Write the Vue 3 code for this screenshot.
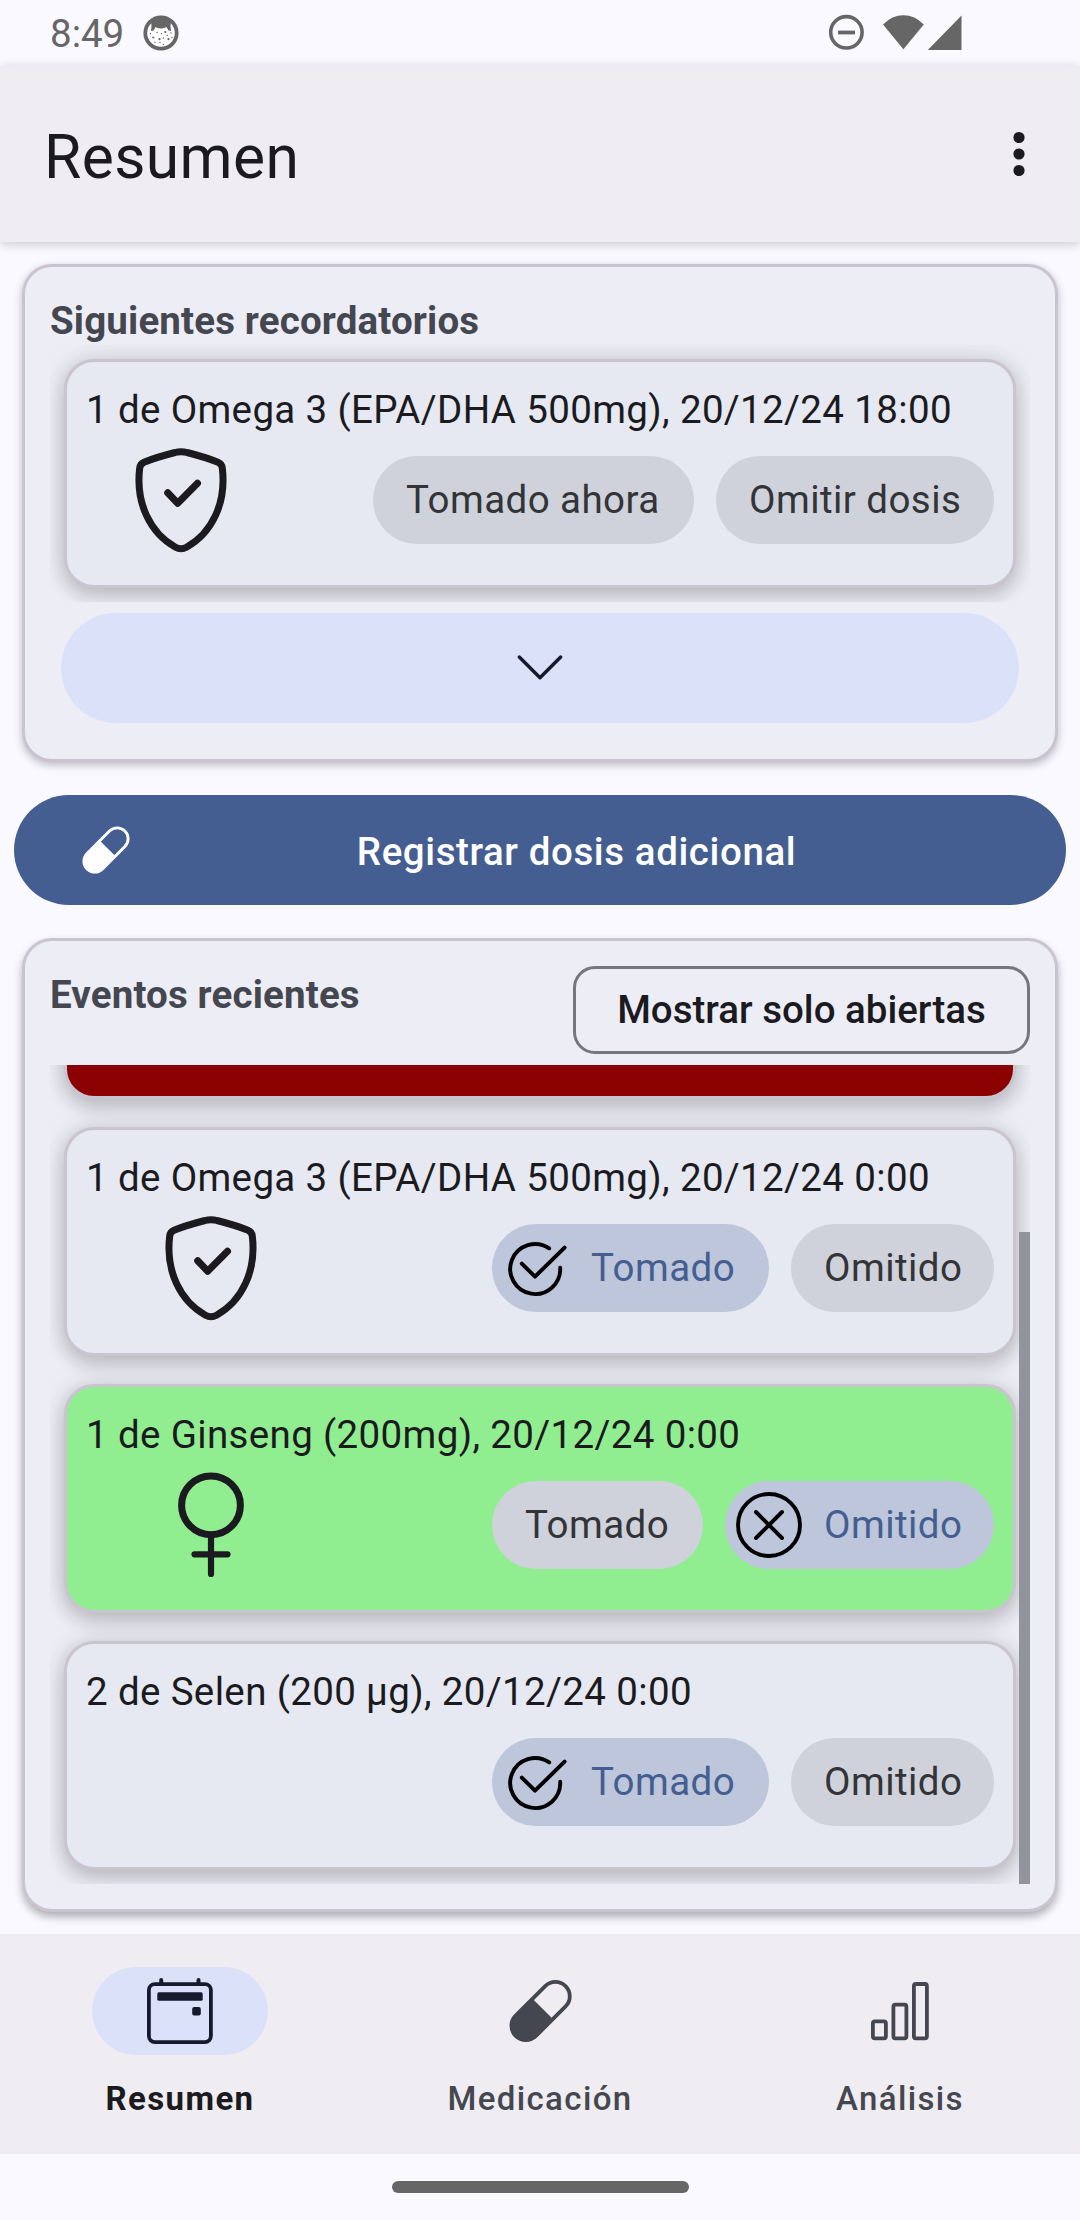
<script setup>
const next = {
  title: '1 de Omega 3 (EPA/DHA 500mg), 20/12/24 18:00',
  icon: 'shield',
  chips: [{ label: 'Tomado ahora', width: 321 }, { label: 'Omitir dosis', width: 278 }],
}

const events = [
  { title: '', tone: 'red', icon: '', chips: [] },
  {
    title: '1 de Omega 3 (EPA/DHA 500mg), 20/12/24 0:00',
    icon: 'shield',
    chips: [{ label: 'Tomado', mark: 'check', width: 277 }, { label: 'Omitido', width: 203 }],
  },
  {
    title: '1 de Ginseng (200mg), 20/12/24 0:00',
    tone: 'green',
    icon: 'female',
    chips: [{ label: 'Tomado', width: 211 }, { label: 'Omitido', mark: 'cross', width: 269 }],
  },
  {
    title: '2 de Selen (200 µg), 20/12/24 0:00',
    icon: '',
    chips: [{ label: 'Tomado', mark: 'check', width: 277 }, { label: 'Omitido', width: 203 }],
  },
]
</script>

<template>
  <div class="screen">
    <header class="status">
      <span class="clock">8:49</span>
      <svg class="cat" width="36" height="36" viewBox="0 0 36 36">
        <circle cx="18" cy="18" r="15.7" fill="#fff" stroke="#666" stroke-width="3.8" />
        <path d="M8 6Q18-1 28 6L27.5 11l.5 5-2.5-.5-2-3.5q-5.5 3-11 0l-2 3.5-2.5.5.5-5Z" fill="#666" />
        <g fill="#666">
          <circle cx="10.3" cy="22.5" r="1.1" /><circle cx="22.3" cy="17" r="1.1" />
          <circle cx="16.5" cy="24.2" r="1.1" /><circle cx="25.5" cy="24.2" r="1.1" />
          <circle cx="14" cy="17.5" r=".7" /><circle cx="7.5" cy="18.5" r=".7" />
          <circle cx="18.4" cy="18.6" r=".7" /><circle cx="28" cy="18" r=".7" />
          <circle cx="20.4" cy="23" r=".7" /><circle cx="12" cy="27.3" r=".7" />
          <circle cx="17" cy="27.5" r=".7" /><circle cx="20.5" cy="29.5" r=".7" />
          <circle cx="24.2" cy="20.5" r=".7" /><circle cx="29" cy="22.5" r=".7" />
        </g>
      </svg>
      <svg class="system" width="138" height="40" viewBox="826 12 138 40" fill="#666">
        <circle cx="846.4" cy="32.3" r="15.7" fill="none" stroke="#666" stroke-width="3.6" />
        <rect x="838" y="30.6" width="17" height="3.8" />
        <path d="M903.4 49.2 883 24.4Q892 15.2 903.4 15.2T923.8 24.4Z" />
        <path d="M961.5 15.6V50H927.8Z" />
      </svg>
    </header>

    <div class="appbar">
      <h1>Resumen</h1>
      <svg width="12" height="46" viewBox="0 0 12 46" fill="#1b1b1f">
        <circle cx="6" cy="6.5" r="5.6" /><circle cx="6" cy="23" r="5.6" /><circle cx="6" cy="39.5" r="5.6" />
      </svg>
    </div>

    <main>
      <section class="panel">
        <h2>Siguientes recordatorios</h2>
        <div class="list">
          <article class="card">
            <p>{{ next.title }}</p>
            <div class="row first">
              <svg class="glyph" viewBox="0 0 110 110">
                <path d="M49 7.5Q55 5.8 61 7.5C70 9.8 84 14 92 17.2Q95.8 18.8 96.3 23C100.5 58 86 88 60.5 102.2Q55 105.2 49.5 102.2C24 88 9.5 58 13.7 23Q14.2 18.8 18 17.2C26 14 40 9.8 49 7.5Z" />
                <path d="M41.7 47.8 51.7 58.2 71.5 38.2" />
              </svg>
              <div class="chips">
                <button v-for="c in next.chips" :key="c.label" class="chip" :style="{ width: c.width + 'px' }">
                  <span>{{ c.label }}</span>
                </button>
              </div>
            </div>
          </article>
        </div>
        <button class="expand">
          <svg width="50" height="30" viewBox="0 0 50 30">
            <path d="M4.3 4 25 24.7 45.7 4" fill="none" stroke="#151b2c" stroke-width="3.4" stroke-linecap="round" stroke-linejoin="round" />
          </svg>
        </button>
      </section>

      <button class="register">
        <svg width="50" height="50" viewBox="0 0 66 66">
          <g transform="translate(33 33) rotate(-45)">
            <rect x="-35.3" y="-14.4" width="70.6" height="28.8" rx="14.4" fill="none" stroke="#fff" stroke-width="3.8" />
            <path d="M3-14.4H-21a14.4 14.4 0 0 0 0 28.8H3Z" fill="#fff" />
          </g>
        </svg>
        <span>Registrar dosis adicional</span>
      </button>

      <section class="panel recent">
        <div class="head">
          <h2>Eventos recientes</h2>
          <button class="outlined">Mostrar solo abiertas</button>
        </div>
        <div class="list scroll">
          <article v-for="(e, i) in events" :key="i" class="card" :class="e.tone">
            <p>{{ e.title }}</p>
            <div class="row">
              <svg class="glyph" viewBox="0 0 110 110">
                <template v-if="e.icon === 'shield'">
                  <path d="M49 7.5Q55 5.8 61 7.5C70 9.8 84 14 92 17.2Q95.8 18.8 96.3 23C100.5 58 86 88 60.5 102.2Q55 105.2 49.5 102.2C24 88 9.5 58 13.7 23Q14.2 18.8 18 17.2C26 14 40 9.8 49 7.5Z" />
                  <path d="M41.7 47.8 51.7 58.2 71.5 38.2" />
                </template>
                <template v-else-if="e.icon === 'female'">
                  <circle cx="55" cy="35.3" r="29.4" />
                  <path d="M55 64.7V104M38.5 84.3H71.5" stroke-width="6.2" />
                </template>
              </svg>
              <div class="chips">
                <button v-for="c in e.chips" :key="c.label" class="chip" :class="{ on: c.mark }" :style="{ width: c.width + 'px' }">
                  <svg v-if="c.mark === 'check'" class="mark" viewBox="0 0 66 66">
                    <path d="M46.2 13.3A25 25 0 1 0 57.2 32.8M18.8 28.6 32 41.6 61.6 12.6" />
                  </svg>
                  <svg v-else-if="c.mark === 'cross'" class="mark" viewBox="0 0 66 66">
                    <circle cx="33" cy="33" r="31" />
                    <path d="M20 20 46 46M46 20 20 46" />
                  </svg>
                  <span>{{ c.label }}</span>
                </button>
              </div>
            </div>
          </article>
          <i class="thumb"></i>
        </div>
      </section>
    </main>

    <nav>
      <a class="active">
        <span class="spot">
          <svg width="66" height="66" viewBox="0 0 66 66" fill="#151b2c">
            <rect x="1.9" y="6.1" width="62" height="58" rx="6" fill="none" stroke="#151b2c" stroke-width="3.8" />
            <path d="M14.2 6V2M51.5 6V2" stroke="#151b2c" stroke-width="4" stroke-linecap="round" />
            <rect x="10.3" y="14.3" width="45.4" height="8.5" rx="1.6" />
            <rect x="45.2" y="29" width="8.6" height="8.5" rx="2" />
          </svg>
        </span>
        <b>Resumen</b>
      </a>
      <a>
        <span class="spot">
          <svg width="66" height="66" viewBox="0 0 66 66">
            <g transform="translate(33.6 33) rotate(-45)">
              <rect x="-35.3" y="-14.4" width="70.6" height="28.8" rx="14.4" fill="none" stroke="#44474f" stroke-width="3.8" />
              <path d="M3-14.4H-21a14.4 14.4 0 0 0 0 28.8H3Z" fill="#44474f" />
            </g>
          </svg>
        </span>
        <b>Medicación</b>
      </a>
      <a>
        <span class="spot">
          <svg width="66" height="66" viewBox="0 0 66 66" fill="none" stroke="#44474f" stroke-width="3.8">
            <rect x="5.9" y="43.3" width="13" height="17" rx="2" />
            <rect x="26.4" y="26.7" width="13" height="33.6" rx="2" />
            <rect x="46.9" y="6" width="13" height="54.3" rx="2" />
          </svg>
        </span>
        <b>Análisis</b>
      </a>
    </nav>
    <footer><i></i></footer>
  </div>
</template>

<style>
body { margin: 0; background: #faf9ff; }
</style>

<style scoped>
.screen {
  width: 1080px;
  height: 2220px;
  display: flex;
  flex-direction: column;
  background: #faf9ff;
  color: #1b1b1f;
  font-family: Roboto, "Noto Sans", sans-serif;
  font-size: 38.5px;
  overflow: hidden;
}
* { box-sizing: border-box; }
svg { display: block; flex: none; }
h1, h2, p { margin: 0; font-weight: 400; }
button { border: 0; padding: 0; background: none; font: inherit; color: inherit; white-space: nowrap; }

.status { height: 66px; flex: none; display: flex; align-items: center; padding: 0 116px 0 50px; color: #666; }
.clock { line-height: 68px; padding-top: 1px; width: 93px; }
.system { margin-left: auto; margin-bottom: 2px; }

.appbar {
  height: 176px;
  flex: none;
  display: flex;
  align-items: center;
  justify-content: space-between;
  padding: 0 55px 0 44px;
  background: #efedf1;
  box-shadow: 0 2px 10px rgba(0, 0, 0, .2);
  position: relative;
}
.appbar h1 { font-size: 60.5px; line-height: 80px; padding-top: 7px; letter-spacing: .0066em; }

main { flex: 1; display: flex; flex-direction: column; padding: 22px; min-height: 0; }
.panel {
  border: 3px solid #cac4d0;
  border-radius: 30px;
  background: #ededf6;
  padding: 0 25px;
  box-shadow: 0 3px 8px rgba(0, 0, 0, .26);
  height: 498px;
  flex: none;
}
.panel h2 { font-size: 38.5px; font-weight: 700; color: #44474f; line-height: 56px; height: 78px; padding-top: 26px; letter-spacing: .004em; }
.list { padding: 14px; overflow: hidden; }
.card {
  height: 229px;
  flex: none;
  border: 3px solid #cac4d0;
  border-radius: 30px;
  background: #e6e9f1;
  box-shadow: 0 8px 18px rgba(20, 24, 16, .18), 0 0 26px rgba(40, 48, 20, .14);
  padding: 20px 19px 0;
}
.card p { line-height: 55px; height: 55px; white-space: pre; letter-spacing: .0093em; }
.card.red { background: #8b0000; }
.card.green { background: #90ee90; }
.row { display: flex; align-items: center; margin-top: 8px; height: 110px; padding-left: 70px; }
.row.first { padding-left: 40px; }
.glyph { width: 110px; height: 110px; fill: none; stroke: #1b1b1f; stroke-width: 7; stroke-linecap: round; stroke-linejoin: round; }
.chips { display: flex; gap: 22px; margin-left: auto; }
.chip {
  height: 88px;
  flex: none;
  display: flex;
  align-items: center;
  padding: 0 0 0 33px;
  border-radius: 44px;
  background: #cfd2da;
  color: #333438;
  letter-spacing: .0115em;
}
.chip span { padding-bottom: 2px; }
.chip.on { background: #bdc6da; color: #455e91; padding-left: 11px; }
.mark { width: 66px; height: 66px; margin-right: 22px; fill: none; stroke: #000; stroke-width: 3.9; stroke-linecap: round; stroke-linejoin: round; }

.expand {
  display: flex;
  align-items: center;
  justify-content: center;
  height: 110px;
  width: 958px;
  margin: 11px 11px 0;
  border-radius: 55px;
  background: #dce1fa;
}
.register {
  display: flex;
  align-items: center;
  flex: none;
  height: 110px;
  margin: 33px -8px;
  padding: 0 66px 0 67px;
  border-radius: 55px;
  background: #455e91;
  color: #fff;
  font-weight: 500;
}
.register span { flex: 1; text-align: center; letter-spacing: .0154em; padding: 2px 0 0 22px; }

.recent { height: 974px; box-shadow: 0 5px 9px rgba(0, 0, 0, .3); }
.head { display: flex; justify-content: space-between; height: 124px; }
.outlined {
  width: 457px;
  height: 88px;
  margin-top: 25px;
  padding-bottom: 2px;
  border: 3px solid #757780;
  border-radius: 22px;
  font-weight: 500;
}
.scroll { position: relative; height: 819px; display: flex; flex-direction: column; justify-content: flex-end; gap: 28px; }
.thumb { position: absolute; right: 0; top: 167px; bottom: 0; width: 11px; background: #91949d; }

nav { height: 220px; flex: none; display: flex; background: #efedf1; position: relative; }
nav a { flex: 1; display: flex; flex-direction: column; align-items: center; padding-top: 33px; color: #44474f; }
.spot { width: 176px; height: 88px; border-radius: 44px; display: flex; align-items: center; justify-content: center; }
.active .spot { background: #dce1fa; }
nav b { font-size: 33px; font-weight: 500; line-height: 44px; margin-top: 22px; letter-spacing: .0417em; }
nav .active { color: #1b1b1f; }
nav .active b { font-weight: 700; }

footer { height: 66px; flex: none; display: flex; justify-content: center; align-items: center; }
footer i { width: 297px; height: 12px; border-radius: 6px; background: #666; }
</style>
